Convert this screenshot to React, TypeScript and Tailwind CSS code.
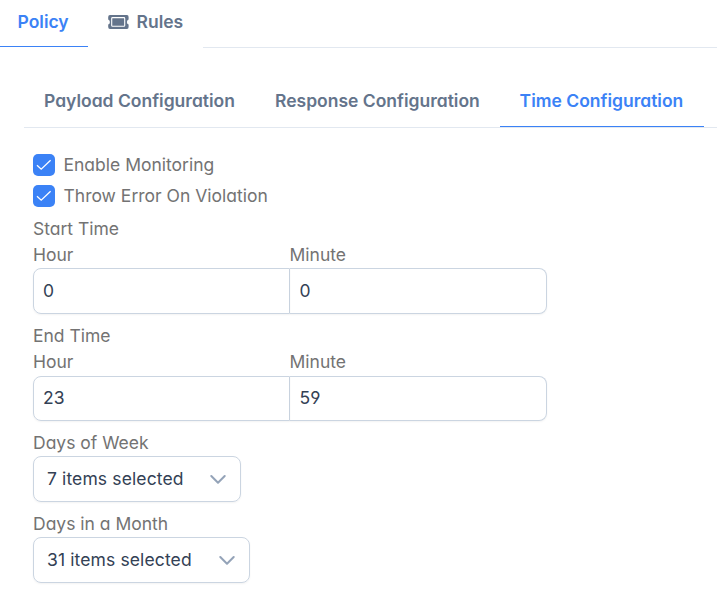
import clsx from "clsx";

const subTabs = [
  { label: "Payload Configuration", width: "w-[231px]" },
  { label: "Response Configuration", width: "w-[244.6px]" },
  { label: "Time Configuration", width: "w-[204px]", active: true },
];

function CheckIcon() {
  return (
    <svg width="16" height="16" viewBox="0 0 16 16" fill="none" stroke="#ffffff" strokeWidth="1.3">
      <path d="M1 8.2 L5.2 12.2 L14.6 3.2" />
    </svg>
  );
}

function TicketIcon() {
  return (
    <svg width="21" height="14" viewBox="0 0 21 14" fill="none">
      <path
        d="M2 0H19Q20.6 0 20.6 2V4.4Q18.9 5 18.9 7T20.6 9.6V12Q20.6 14 19 14H2Q0.2 14 0.2 12V9.6Q1.9 9 1.9 7T0.2 4.4V2Q0.2 0 2 0Z"
        fill="#64748b"
      />
      <rect x="3.7" y="2.6" width="13" height="8.6" rx="0.8" stroke="#ffffff" strokeWidth="1.1" />
    </svg>
  );
}

function CheckField({ label }: { label: string }) {
  return (
    <label className="flex h-[31px] items-center">
      <span className="flex h-[22px] w-[22px] items-center justify-center rounded-[5px] bg-[#3b82f6]">
        <CheckIcon />
      </span>
      <span className="ml-[8.5px] pt-px">{label}</span>
    </label>
  );
}

function TimeField({ label, hour, minute, height }: { label: string; hour: string; minute: string; height: string }) {
  return (
    <div>
      <div className="h-[26px] leading-[26px]">{label}</div>
      <div className="flex h-[26px] w-[514px] leading-[26px]">
        <span className="w-[256.5px]">Hour</span>
        <span>Minute</span>
      </div>
      <div className={clsx("flex w-[514px]", height)}>
        <input
          className="h-full w-[257px] rounded-l-[8px] border border-[#cbd5e1] px-[9px] pb-[2px] text-[#334155] shadow-[0_1px_2px_rgba(18,18,23,0.05)] outline-none"
          defaultValue={hour}
        />
        <input
          className="h-full w-[257px] rounded-r-[8px] border border-l-0 border-[#cbd5e1] px-[9.5px] pb-[2px] text-[#334155] shadow-[0_1px_2px_rgba(18,18,23,0.05)] outline-none"
          defaultValue={minute}
        />
      </div>
    </div>
  );
}

function MultiSelect({ label, value, width }: { label: string; value: string; width: string }) {
  return (
    <div>
      <div className="h-[26px] leading-[26px]">{label}</div>
      <button
        className={clsx(
          "flex h-[46px] items-center justify-between rounded-[8px] border border-[#cbd5e1] pr-[14px] pl-[13px] tracking-[0.12px] text-[#334155] shadow-[0_1px_2px_rgba(18,18,23,0.05)]",
          width
        )}
      >
        {value}
        <svg width="16" height="16" viewBox="0 0 16 16" fill="none" stroke="#94a3b8" strokeWidth="2" strokeLinecap="round" strokeLinejoin="round">
          <path d="M1.3 5 L8 11.7 L14.7 5" />
        </svg>
      </button>
    </div>
  );
}

export default function App() {
  return (
    <main className="h-[612px] w-full overflow-hidden bg-white font-['Inter',sans-serif] text-[17.5px] text-[#737373] [font-feature-settings:'cv02','cv03','cv04','cv11']">
      <nav className="flex h-[48px] font-semibold text-[#64748b]">
        <div className="h-[47px] w-[88px] border-b border-[#3b82f6] pl-[17.5px] leading-[44px] text-[#3b82f6]">Policy</div>
        <div className="flex w-[115px] items-center pb-[4px] pl-[20px]">
          <TicketIcon />
          <span className="ml-[7.5px]">Rules</span>
        </div>
        <div className="flex-1 border-b border-[#e2e8f0]" />
      </nav>

      <nav className="mt-[32px] ml-[24px] flex h-[48px] border-b border-[#e2e8f0] font-semibold text-[#64748b]">
        {subTabs.map((tab) => (
          <div
            key={tab.label}
            className={clsx("h-[47px] border-b pl-[20px] leading-[42px] whitespace-nowrap", tab.width, tab.active ? "border-[#3b82f6] text-[#3b82f6]" : "border-transparent")}
          >
            {tab.label}
          </div>
        ))}
      </nav>

      <section className="mt-[21px] ml-[33px]">
        <CheckField label="Enable Monitoring" />
        <CheckField label="Throw Error On Violation" />
        <div className="mt-[5px]">
          <TimeField label="Start Time" hour="0" minute="0" height="h-[46px]" />
        </div>
        <div className="mt-[9px]">
          <TimeField label="End Time" hour="23" minute="59" height="mt-px h-[45px]" />
        </div>
        <div className="mt-[9px]">
          <MultiSelect label="Days of Week" value="7 items selected" width="w-[208px]" />
        </div>
        <div className="mt-[9px]">
          <MultiSelect label="Days in a Month" value="31 items selected" width="w-[217px]" />
        </div>
      </section>
    </main>
  );
}
